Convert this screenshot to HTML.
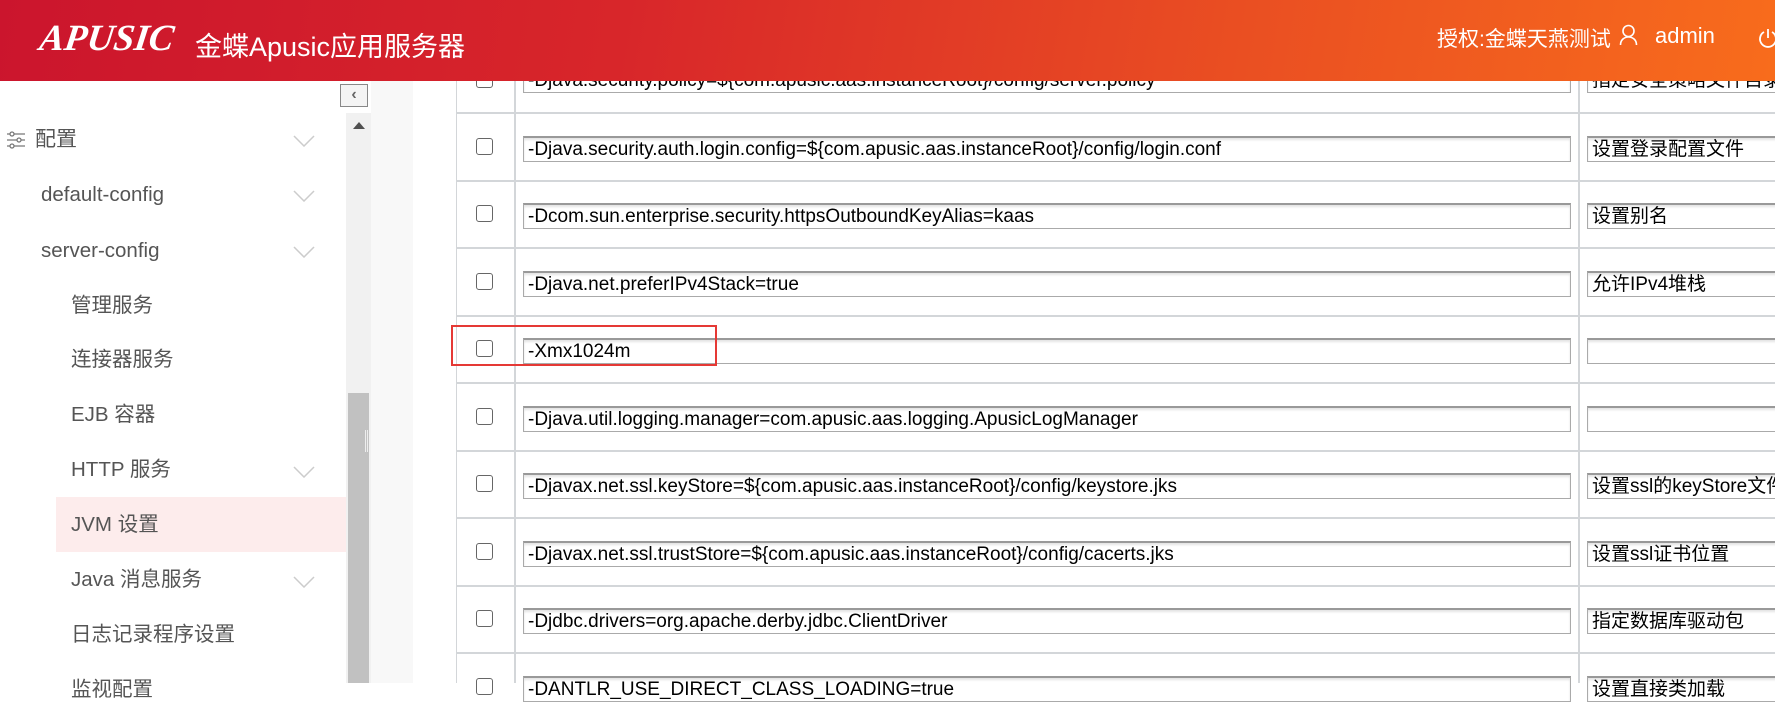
<!DOCTYPE html>
<html><head><meta charset="utf-8">
<style>
*{margin:0;padding:0;box-sizing:border-box}
body{width:1775px;height:683px;overflow:hidden;background:#fff;font-family:"Liberation Sans","Noto Sans CJK SC",sans-serif;position:relative}
.hdr{position:absolute;left:0;top:0;width:1775px;height:81px;background:linear-gradient(100deg,#cb152d 0%,#d8262a 35%,#ea4f22 70%,#f86c1c 100%);color:#fff;z-index:5}
.logo{position:absolute;left:40px;top:17px;font-family:"Liberation Serif",serif;font-style:italic;font-weight:bold;font-size:37px;transform:skewX(-8deg)}
.title{position:absolute;left:195px;top:25px;font-size:27px}
.auth{position:absolute;left:1437px;top:23px;font-size:21px}
.admin{position:absolute;left:1655px;top:23px;font-size:22px}
.side{position:absolute;left:0;top:80px;width:346px;height:603px;background:#fff}
.item{position:absolute;color:#555;font-size:20.5px;line-height:24px}
.chev{position:absolute;left:293px;width:22px;height:12px}
.track{position:absolute;left:346px;top:113px;width:25px;height:570px;background:#f1f1f1}
.thumb{position:absolute;left:348px;top:393px;width:21px;height:290px;background:#c1c1c1}
.gap{position:absolute;left:371px;top:80px;width:42px;height:603px;background:#f8f8f8}
.colbtn{position:absolute;left:340px;top:84px;width:28px;height:23px;border:1px solid #888;background:#f4f4f4;color:#666;font-size:16px;text-align:center;line-height:20px;font-weight:bold}
.tbl{position:absolute;left:456px;top:0;width:1319px;height:683px;border-left:1px solid #d3d6d9}
.vline{position:absolute;left:514px;top:0;width:2px;height:683px;background:#d3d6d9}
.vline2{position:absolute;left:1578px;top:0;width:2px;height:683px;background:#d3d6d9}
.hline{position:absolute;left:457px;width:1318px;height:2px;background:#d3d6d9}
.cb{position:absolute;left:476px;width:17px;height:17px;border:1px solid #666;border-radius:3px;background:#fff}
.in{position:absolute;height:26px;border:1px solid #aaa;border-top:2px solid #999;box-shadow:inset 0 2px 2px #e4e4e4;background:#fff;font-size:19px;line-height:23px;padding-left:4px;color:#000;white-space:nowrap;overflow:hidden}
.i1{left:523px;width:1048px}
.i2{left:1587px;width:200px}
.red{position:absolute;left:451px;top:325px;width:266px;height:41px;border:2px solid #e53935}
</style></head><body>
<div class="hdr">
<div class="logo">APUSIC</div>
<div class="title">金蝶Apusic应用服务器</div>
<div class="auth">授权:金蝶天燕测试</div>
<svg style="position:absolute;left:1619px;top:24px" width="19" height="22" viewBox="0 0 19 22" fill="none" stroke="#fff" stroke-width="1.6"><circle cx="9.5" cy="7" r="5.5"/><path d="M1.5 21c0-5 3.5-8 8-8s8 3 8 8"/></svg>
<div class="admin">admin</div>
<svg style="position:absolute;left:1758px;top:27px" width="20" height="22" viewBox="0 0 20 22" fill="none" stroke="#fff" stroke-width="1.8"><path d="M6 5a8 8 0 1 0 8 0"/><path d="M10 2v9"/></svg>
</div>

<div class="side">
<div style="position:absolute;left:56px;top:417px;width:290px;height:55px;background:#fdecec"></div>
</div>
<svg style="position:absolute;left:6px;top:131px" width="20" height="18" viewBox="0 0 20 18" fill="none" stroke="#777" stroke-width="1.3"><path d="M1 3h18M1 9h18M1 15h18"/><circle cx="6" cy="3" r="2" fill="#fff"/><circle cx="13" cy="9" r="2" fill="#fff"/><circle cx="6" cy="15" r="2" fill="#fff"/></svg>
<div class="item" style="left:35px;top:128px;font-size:21px">配置</div>
<div class="item" style="left:41px;top:183px">default-config</div>
<div class="item" style="left:41px;top:239px">server-config</div>
<div class="item" style="left:71px;top:294px">管理服务</div>
<div class="item" style="left:71px;top:348px">连接器服务</div>
<div class="item" style="left:71px;top:403px">EJB 容器</div>
<div class="item" style="left:71px;top:458px">HTTP 服务</div>
<div class="item" style="left:71px;top:513px">JVM 设置</div>
<div class="item" style="left:71px;top:568px">Java 消息服务</div>
<div class="item" style="left:71px;top:623px">日志记录程序设置</div>
<div class="item" style="left:71px;top:678px">监视配置</div>
<svg class="chev" style="top:135px" viewBox="0 0 22 12" fill="none" stroke="#ccc" stroke-width="1.5"><path d="M1 1l10 10 10-10"/></svg>
<svg class="chev" style="top:190px" viewBox="0 0 22 12" fill="none" stroke="#ccc" stroke-width="1.5"><path d="M1 1l10 10 10-10"/></svg>
<svg class="chev" style="top:246px" viewBox="0 0 22 12" fill="none" stroke="#ccc" stroke-width="1.5"><path d="M1 1l10 10 10-10"/></svg>
<svg class="chev" style="top:466px" viewBox="0 0 22 12" fill="none" stroke="#ccc" stroke-width="1.5"><path d="M1 1l10 10 10-10"/></svg>
<svg class="chev" style="top:576px" viewBox="0 0 22 12" fill="none" stroke="#ccc" stroke-width="1.5"><path d="M1 1l10 10 10-10"/></svg>

<div class="track"></div>
<svg style="position:absolute;left:353px;top:122px" width="12" height="7"><path d="M0 7L6 0L12 7Z" fill="#505050"/></svg>
<div class="thumb"></div>
<div style="position:absolute;left:365px;top:430px;width:3px;height:22px;border-left:1px solid #eee;border-right:1px solid #eee"></div>
<div class="gap"></div>
<div class="colbtn">&lsaquo;</div>

<div class="tbl"></div>
<div class="vline"></div>
<div class="vline2"></div>

<div class="hline" style="top:112px"></div>
<div class="hline" style="top:180px"></div>
<div class="hline" style="top:247px"></div>
<div class="hline" style="top:315px"></div>
<div class="hline" style="top:382px"></div>
<div class="hline" style="top:450px"></div>
<div class="hline" style="top:517px"></div>
<div class="hline" style="top:585px"></div>
<div class="hline" style="top:652px"></div>

<div class="cb" style="top:71px"></div>
<div class="in i1" style="top:67px">-Djava.security.policy=${com.apusic.aas.instanceRoot}/config/server.policy</div>
<div class="in i2" style="top:67px">指定安全策略文件目录</div>

<div class="cb" style="top:138px"></div>
<div class="in i1" style="top:136px">-Djava.security.auth.login.config=${com.apusic.aas.instanceRoot}/config/login.conf</div>
<div class="in i2" style="top:136px">设置登录配置文件</div>

<div class="cb" style="top:205px"></div>
<div class="in i1" style="top:203px">-Dcom.sun.enterprise.security.httpsOutboundKeyAlias=kaas</div>
<div class="in i2" style="top:203px">设置别名</div>

<div class="cb" style="top:273px"></div>
<div class="in i1" style="top:271px">-Djava.net.preferIPv4Stack=true</div>
<div class="in i2" style="top:271px">允许IPv4堆栈</div>

<div class="cb" style="top:340px"></div>
<div class="in i1" style="top:338px">-Xmx1024m</div>
<div class="in i2" style="top:338px"></div>

<div class="cb" style="top:408px"></div>
<div class="in i1" style="top:406px">-Djava.util.logging.manager=com.apusic.aas.logging.ApusicLogManager</div>
<div class="in i2" style="top:406px"></div>

<div class="cb" style="top:475px"></div>
<div class="in i1" style="top:473px">-Djavax.net.ssl.keyStore=${com.apusic.aas.instanceRoot}/config/keystore.jks</div>
<div class="in i2" style="top:473px">设置ssl的keyStore文件</div>

<div class="cb" style="top:543px"></div>
<div class="in i1" style="top:541px">-Djavax.net.ssl.trustStore=${com.apusic.aas.instanceRoot}/config/cacerts.jks</div>
<div class="in i2" style="top:541px">设置ssl证书位置</div>

<div class="cb" style="top:610px"></div>
<div class="in i1" style="top:608px">-Djdbc.drivers=org.apache.derby.jdbc.ClientDriver</div>
<div class="in i2" style="top:608px">指定数据库驱动包</div>

<div class="cb" style="top:678px"></div>
<div class="in i1" style="top:676px">-DANTLR_USE_DIRECT_CLASS_LOADING=true</div>
<div class="in i2" style="top:676px">设置直接类加载</div>

<div class="red"></div>
</body></html>
